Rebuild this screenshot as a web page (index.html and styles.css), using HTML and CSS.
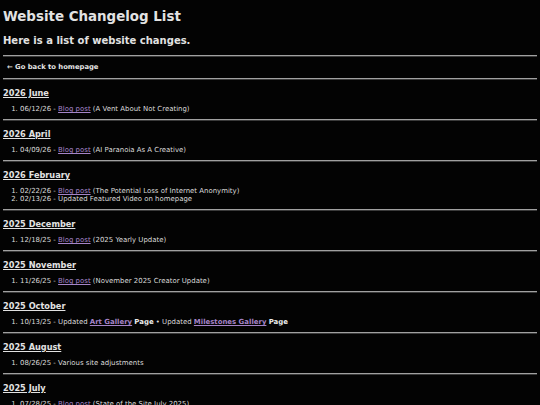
FILE: index.html
```html
<!DOCTYPE html>
<html>
<head>
<meta charset="utf-8">
<link rel="stylesheet" href="styles.css">
</head>
<body>
<h1 class="title">Website Changelog List</h1>
<p class="subtitle">Here is a list of website changes.</p>
<hr class="rule">
<nav class="nav"><a href="#" class="back">← Go back to homepage</a></nav>
<hr class="rule">

<h2 class="month">2026 June</h2>
<ol class="items">
<li>06/12/26 - <a href="#" class="link">Blog post</a> (A Vent About Not Creating)</li>
</ol>
<hr class="rule">

<h2 class="month">2026 April</h2>
<ol class="items">
<li>04/09/26 - <a href="#" class="link">Blog post</a> (AI Paranoia As A Creative)</li>
</ol>
<hr class="rule">

<h2 class="month">2026 February</h2>
<ol class="items">
<li>02/22/26 - <a href="#" class="link">Blog post</a> (The Potential Loss of Internet Anonymity)</li>
<li>02/13/26 - Updated Featured Video on homepage</li>
</ol>
<hr class="rule">

<h2 class="month">2025 December</h2>
<ol class="items">
<li>12/18/25 - <a href="#" class="link">Blog post</a> (2025 Yearly Update)</li>
</ol>
<hr class="rule">

<h2 class="month">2025 November</h2>
<ol class="items">
<li>11/26/25 - <a href="#" class="link">Blog post</a> (November 2025 Creator Update)</li>
</ol>
<hr class="rule">

<h2 class="month">2025 October</h2>
<ol class="items">
<li>10/13/25 - Updated <a href="#" class="link strong">Art Gallery</a> <b class="strong">Page</b> • Updated <a href="#" class="link strong">Milestones Gallery</a> <b class="strong">Page</b></li>
</ol>
<hr class="rule">

<h2 class="month">2025 August</h2>
<ol class="items">
<li>08/26/25 - Various site adjustments</li>
</ol>
<hr class="rule">

<h2 class="month">2025 July</h2>
<ol class="items">
<li>07/28/25 - <a href="#" class="link">Blog post</a> (State of the Site July 2025)</li>
</ol>
<hr class="rule">
</body>
</html>
```

FILE: styles.css
```css
html, body {
  background: #030303;
}
body {
  margin: 0 3px;
  color: #dadada;
  font-family: "DejaVu Sans", Verdana, sans-serif;
}
.title {
  margin: 9px 0 0;
  font-size: 13.4px;
  line-height: 16px;
  font-weight: bold;
  color: #e2e2e2;
}
.subtitle {
  margin: 10px 0 0;
  font-size: 10px;
  line-height: 12px;
  font-weight: bold;
  color: #e2e2e2;
}
.rule {
  margin: 8px 0 0;
  height: 0;
  border: 0;
  border-top: 1px solid #a0a0a0;
  border-bottom: 1px solid #3a3a3a;
}
.nav {
  margin-top: 6px;
  padding-left: 4px;
  font-size: 6.8px;
  line-height: 8px;
  font-weight: bold;
}
.back {
  color: #e6e6e6;
  text-decoration: none;
}
.nav + .rule {
  margin-top: 7px;
}
.month {
  margin: 8px 0 0;
  font-size: 8.2px;
  line-height: 10px;
  font-weight: bold;
  text-decoration: underline;
  color: #e2e2e2;
}
.items {
  margin: 7px 0 0;
  padding-left: 17px;
  font-size: 6.95px;
  line-height: 8px;
}
.items + .rule {
  margin-top: 6px;
}
.link {
  color: #a584c8;
}
.strong {
  font-weight: bold;
}
b.strong {
  color: #ececec;
}
```
